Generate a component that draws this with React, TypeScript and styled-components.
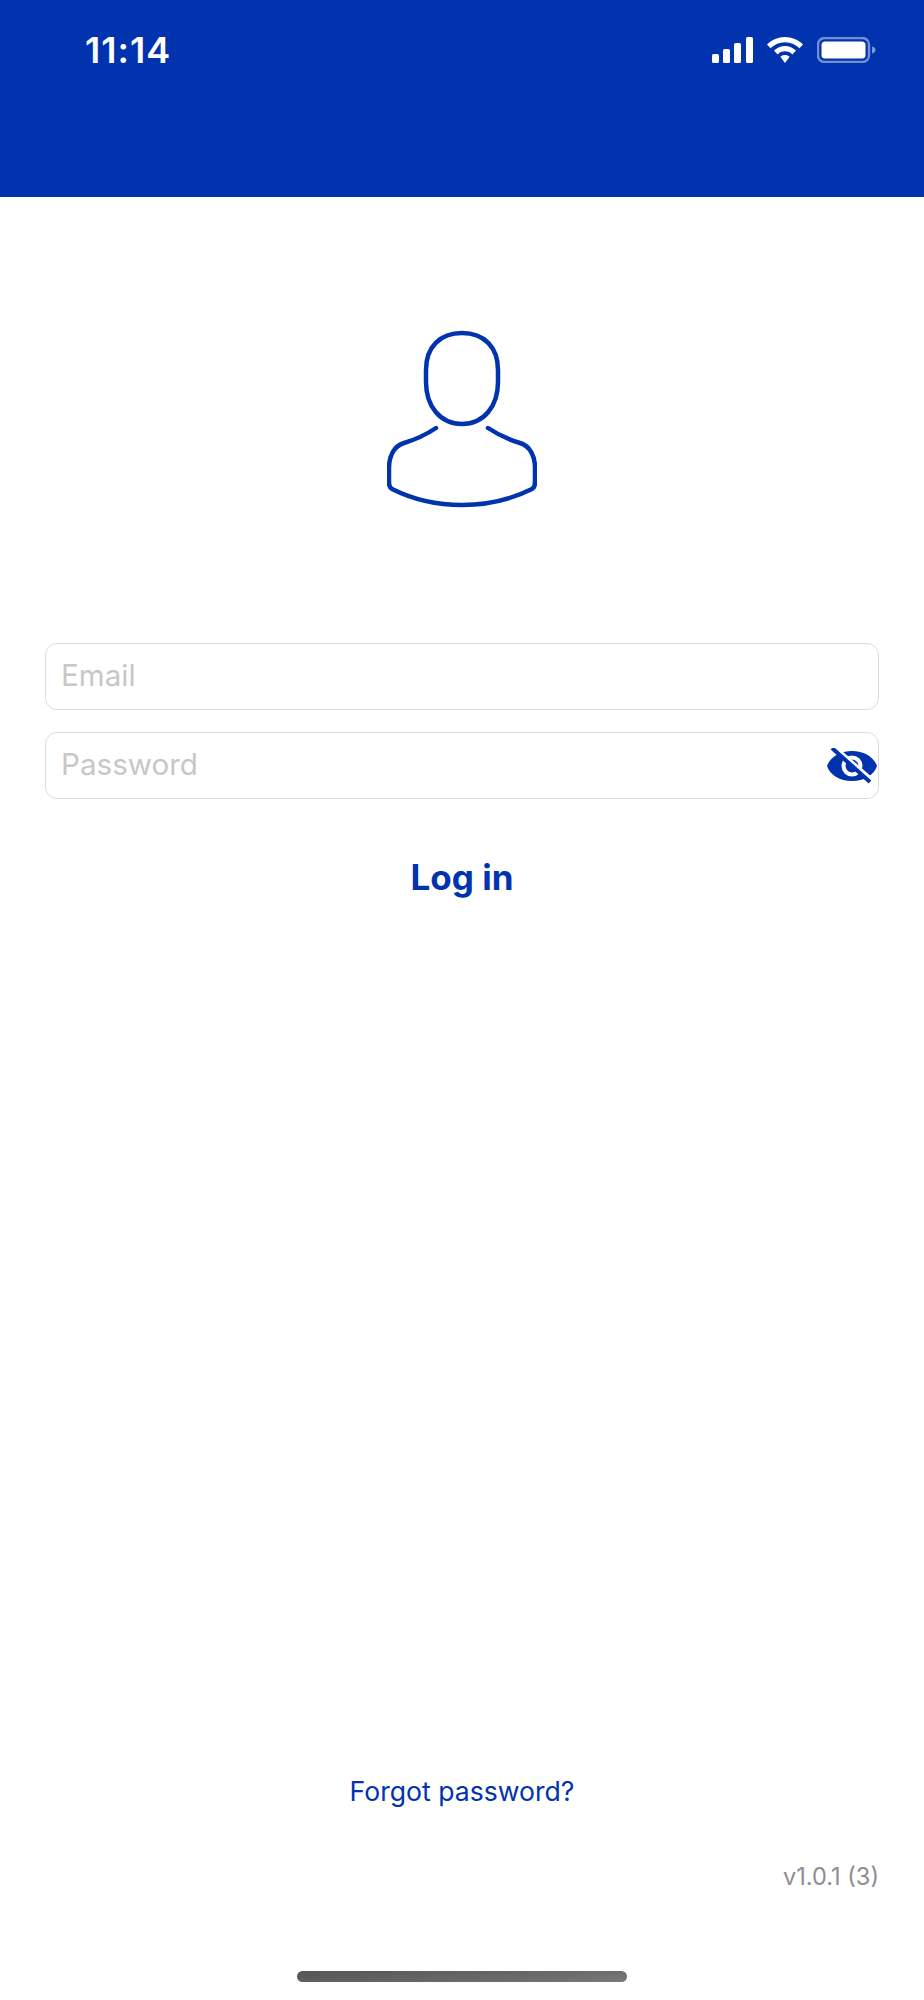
import * as React from 'react';
import styled, {createGlobalStyle} from "styled-components";

const BLUE = '#0033ad';

const GlobalStyle = createGlobalStyle`
  html, body {
    margin: 0;
    padding: 0;
    background: #fff;
    font-family: Inter, "Liberation Sans", sans-serif;
  }
`;

const SignalIcon = () => (
    <svg width="41" height="26" viewBox="0 0 41 26" fill="#fff">
        <rect x="0" y="17" width="7" height="9" rx="1.6"/>
        <rect x="11" y="12" width="7" height="14" rx="1.6"/>
        <rect x="22" y="6" width="7" height="20" rx="1.6"/>
        <rect x="34" y="0" width="7" height="26" rx="1.6"/>
    </svg>
);

const WifiIcon = () => (
    <svg width="36" height="26" viewBox="0 0 36 26" fill="#fff">
        <path d="M18 0C11 0 5 2.800 0 7.500L3.500 11.300C7.500 7.500 12.500 5.300 18 5.300C23.500 5.300 28.500 7.500 32.500 11.300L36 7.500C31 2.800 25 0 18 0Z"/>
        <path d="M18 9C13.800 9 10 10.700 7 13.600L10.600 17.400C12.600 15.500 15.200 14.300 18 14.300C20.800 14.300 23.400 15.500 25.400 17.400L29 13.600C26 10.700 22.200 9 18 9Z"/>
        <path d="M18 18C16.200 18 14.700 18.600 13.400 19.800L18 26L22.600 19.800C21.300 18.600 19.800 18 18 18Z"/>
    </svg>
);

const BatteryIcon = () => (
    <svg width="59" height="26" viewBox="0 0 59 26">
        <rect x="1" y="1" width="51" height="24" rx="6.500" fill="none" stroke="#fff" strokeOpacity="0.45" strokeWidth="2.400"/>
        <rect x="4.500" y="4.500" width="44" height="17" rx="3.500" fill="#fff"/>
        <path d="M55 9.500C57 10 58.500 11.300 58.500 13C58.500 14.700 57 16 55 16.500Z" fill="#fff" fillOpacity="0.5"/>
    </svg>
);

const PersonIcon = () => (
    <svg width="150" height="180" viewBox="25 20 150 180" fill="none" stroke={BLUE} strokeWidth="4.500" strokeLinecap="round">
        <path d="M100 23C78 23 64 37 64 60V72C64 96 78 114 100 114C122 114 136 96 136 72V60C136 37 122 23 100 23Z"/>
        <path d="M74 118C62 126 52 130 42 133C32 136 27 146 27 158V168C27 175 27 177 30 179C50 189 72 195 100 195C128 195 150 189 170 179C173 177 173 175 173 168V158C173 146 168 136 158 133C148 130 138 126 126 118"/>
    </svg>
);

const EyeSlashIcon = () => (
    <svg width="50" height="36" viewBox="0 0 50 36">
        <path d="M0 18C3 9 13 3 25 3C37 3 47 9 50 18C47 27 37 33 25 33C13 33 3 27 0 18Z" fill={BLUE}/>
        <circle cx="25" cy="18" r="8.500" fill="none" stroke="#fff" strokeWidth="4"/>
        <path d="M7 0L46 34" stroke="#fff" strokeWidth="6"/>
        <path d="M5 0L43 34" stroke={BLUE} strokeWidth="4"/>
    </svg>
);

class App extends React.Component<{}, {}> {
    public render() {
        return (
            <Page>
                <GlobalStyle/>
                <Header>
                    <Time>11:14</Time>
                    <StatusIcons>
                        <SignalIcon/>
                        <WifiIcon/>
                        <BatteryIcon/>
                    </StatusIcons>
                </Header>
                <Main>
                    <Avatar>
                        <PersonIcon/>
                    </Avatar>
                    <Form>
                        <Field>
                            <Placeholder>Email</Placeholder>
                        </Field>
                        <Field>
                            <Placeholder>Password</Placeholder>
                            <EyeToggle>
                                <EyeSlashIcon/>
                            </EyeToggle>
                        </Field>
                    </Form>
                    <LoginButton>Log in</LoginButton>
                </Main>
                <Footer>
                    <ForgotLink>Forgot password?</ForgotLink>
                    <Version>v1.0.1 (3)</Version>
                    <HomeBar/>
                </Footer>
            </Page>
        );
    }
}

const Page = styled.div`
  display: flex;
  flex-direction: column;
  height: 2000px;
  background: #fff;
`;

const Header = styled.div`
  display: flex;
  justify-content: space-between;
  align-items: flex-start;
  height: 197px;
  box-sizing: border-box;
  padding: 37px 48px 0 85px;
  background: ${BLUE};
`;

const Time = styled.div`
  font-size: 36px;
  font-weight: 600;
  line-height: 26px;
  letter-spacing: 1px;
  color: #fff;
`;

const StatusIcons = styled.div`
  display: flex;
  align-items: center;
  gap: 14px;
`;

const Main = styled.div`
  display: flex;
  flex-direction: column;
  flex: 1;
  padding: 0 45px;
`;

const Avatar = styled.div`
  display: flex;
  justify-content: center;
  margin-top: 133px;
`;

const Form = styled.div`
  display: flex;
  flex-direction: column;
  gap: 22px;
  margin-top: 133px;
`;

const Field = styled.div`
  position: relative;
  display: flex;
  align-items: center;
  height: 67px;
  box-sizing: border-box;
  padding: 0 15px 3px;
  border: 1px solid #dcdcdc;
  border-radius: 12px;
`;

const Placeholder = styled.div`
  font-size: 29.600px;
  color: #c7c7c7;
`;

const EyeToggle = styled.div`
  position: absolute;
  top: 15px;
  right: 1px;
  display: flex;
`;

const LoginButton = styled.div`
  margin-top: 58px;
  font-size: 35px;
  font-weight: 700;
  line-height: 40px;
  text-align: center;
  color: ${BLUE};
`;

const Footer = styled.div`
  display: flex;
  flex-direction: column;
  padding: 0 45px 18px 45px;
`;

const ForgotLink = styled.div`
  font-size: 26.600px;
  line-height: 32px;
  text-align: center;
  color: ${BLUE};
`;

const Version = styled.div`
  margin-top: 57px;
  font-size: 23.600px;
  line-height: 26px;
  text-align: right;
  color: #8e8e92;
`;

const HomeBar = styled.div`
  align-self: center;
  width: 330px;
  height: 11px;
  margin-top: 81px;
  border-radius: 6px;
  background: linear-gradient(175deg, #555 0%, #6c6c6c 70%, #7a7a7a 100%);
`;

export default App;
